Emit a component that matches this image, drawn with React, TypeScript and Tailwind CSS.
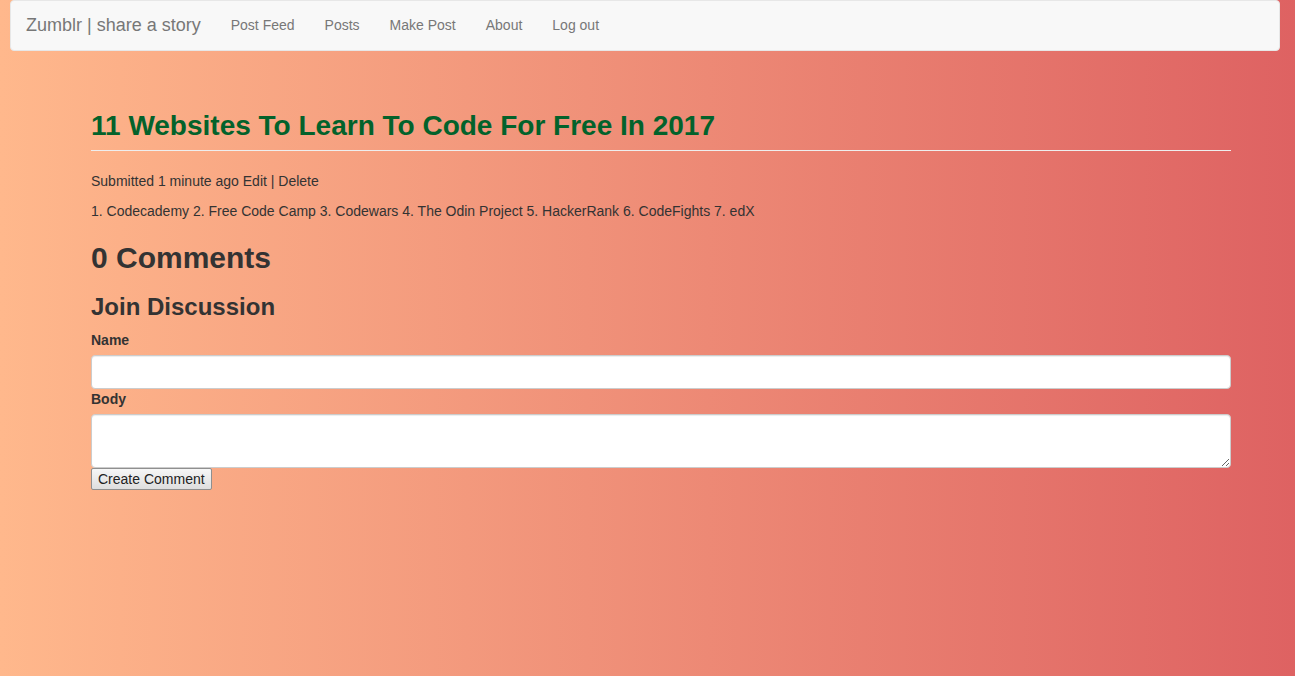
const navLinks = ["Post Feed", "Posts", "Make Post", "About", "Log out"];

export default function App() {
  return (
    <div className="min-h-[676px] bg-[linear-gradient(to_right,#ffb88c,#de6262)] font-['Liberation_Sans',Arial,sans-serif] text-[14px] leading-[20px] text-[#333]">
      <nav className="ml-[10px] mr-[15px] flex h-[51px] items-stretch rounded-[4px] border border-[#e7e7e7] bg-[#f8f8f8]">
        <a className="px-[15px] pt-[14px] text-[18px] leading-[20px] text-[#777]">
          Zumblr | share a story
        </a>
        <ul className="flex">
          {navLinks.map((l) => (
            <li key={l}>
              <a className="block px-[15px] pt-[14px] text-[#777]">{l}</a>
            </li>
          ))}
        </ul>
      </nav>

      <main className="ml-[91px] w-[1140px] pt-[58px]">
        <div className="mb-[20px] border-b border-[#eee] pb-[8px]">
          <h1 className="text-[28px] font-bold leading-[33px] text-[#03622b]">
            11 Websites To Learn To Code For Free In 2017
          </h1>
        </div>
        <p className="mb-[10px]">Submitted 1 minute ago Edit | Delete</p>
        <p className="mb-[10px]">
          1. Codecademy 2. Free Code Camp 3. Codewars 4. The Odin Project 5.
          HackerRank 6. CodeFights 7. edX
        </p>

        <h2 className="mt-[20px] mb-[10px] text-[30px] font-bold leading-[33px]">
          0 Comments
        </h2>
        <h3 className="mt-[20px] mb-[10px] text-[24px] font-bold leading-[26px]">
          Join Discussion
        </h3>

        <form className="flex flex-col items-start">
          <label className="mb-[5px] font-bold">Name</label>
          <input
            type="text"
            className="h-[34px] w-full rounded-[4px] border border-[#ccc] bg-white px-[12px] shadow-[inset_0_1px_1px_rgba(0,0,0,0.075)]"
          />
          <label className="mb-[5px] font-bold">Body</label>
          <textarea className="h-[54px] w-full rounded-[4px] border border-[#ccc] bg-white px-[12px] py-[6px] shadow-[inset_0_1px_1px_rgba(0,0,0,0.075)]" />
          <button
            type="button"
            className="h-[22px] rounded-[2px] border border-[#8f8f8f] bg-[linear-gradient(#f6f6f6,#dedede)] px-[6px] text-[14px] leading-[18px] text-[#222]"
          >
            Create Comment
          </button>
        </form>
      </main>
    </div>
  );
}
